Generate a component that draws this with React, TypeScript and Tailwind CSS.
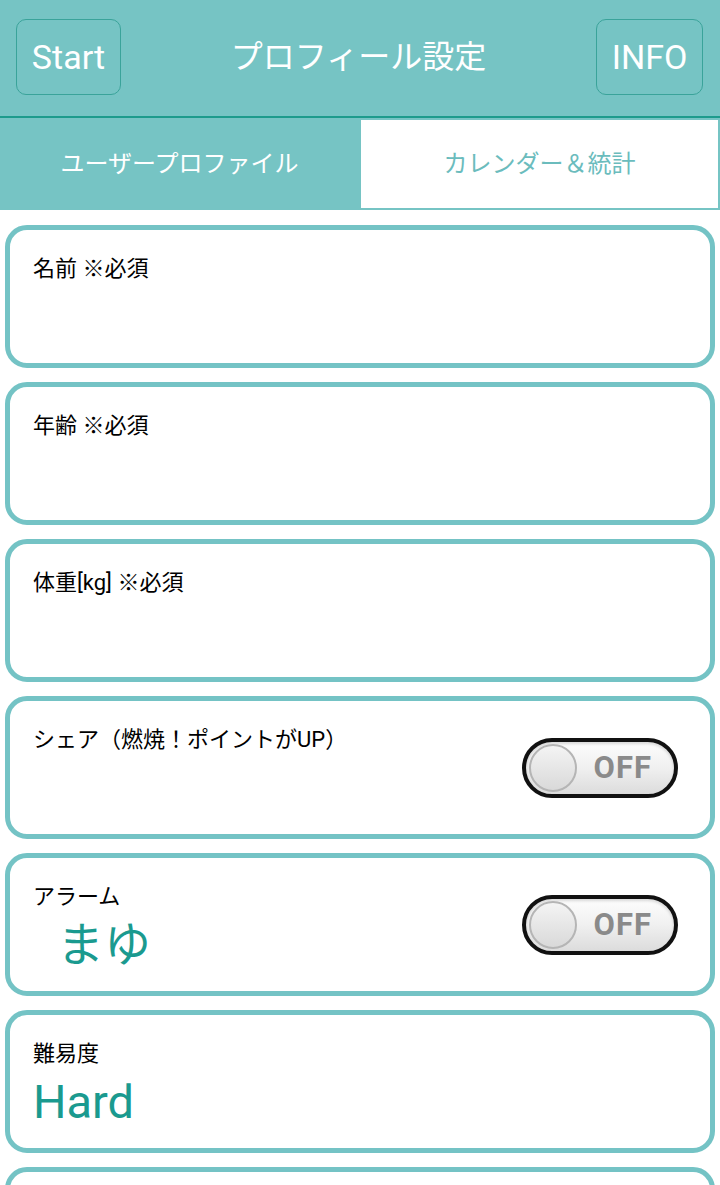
import React from "react";

const FONT = { fontFamily: '"Roboto", "Noto Sans CJK JP", sans-serif' } as React.CSSProperties;

function Toggle() {
  return (
    <div className="relative mr-[9px] h-[60px] w-[156px] shrink-0 rounded-full border-[4px] border-[#111] bg-gradient-to-b from-[#fdfdfd] via-[#f0f0f0] to-[#dcdcdc] shadow-[inset_0_2px_3px_rgba(0,0,0,0.15)]">
      <div className="absolute left-[3px] top-[2px] h-[48px] w-[48px] rounded-full border-[2px] border-[#b5b5b5] bg-gradient-to-b from-[#f4f4f4] to-[#d9d9d9]" />
      <div className="absolute right-[22px] top-0 flex h-full items-center text-[31px] font-bold leading-none tracking-[1px] text-[#8a8a8a]">
        OFF
      </div>
    </div>
  );
}

function Card({
  label,
  value,
  valueIndent,
  toggle,
}: {
  label: string;
  value?: string;
  valueIndent?: boolean;
  toggle?: boolean;
}) {
  return (
    <div className="flex h-[143px] shrink-0 items-center justify-between rounded-[22px] border-[5px] border-[#74c3c5] bg-white pl-[23px] pr-[23px]">
      <div className="flex h-full flex-col self-start pt-[23px]">
        <div className="text-[22px] leading-[31px] text-black">{label}</div>
        {value && (
          <div
            className={`mt-[5px] text-[47px] leading-[55px] text-[#1a9a8f] ${valueIndent ? "ml-[24px]" : ""}`}
          >
            {value}
          </div>
        )}
      </div>
      {toggle && <Toggle />}
    </div>
  );
}

export default function App() {
  return (
    <div className="h-[1185px] w-[720px] overflow-hidden bg-white" style={FONT}>
      {/* Header */}
      <div className="flex h-[118px] items-center justify-between border-b-[2px] border-[#1d9b8c] bg-[#76c4c4] px-[16px] pb-[2px]">
        <div className="flex h-[76px] w-[105px] items-center justify-center rounded-[10px] border-[1.5px] border-[#3aa39a] text-[34px] text-white">
          Start
        </div>
        <div className="text-[32px] text-white">プロフィール設定</div>
        <div className="mr-[1px] flex h-[76px] w-[107px] items-center justify-center rounded-[10px] border-[1.5px] border-[#3aa39a] text-[34px] text-white">
          INFO
        </div>
      </div>
      {/* Tabs */}
      <div className="grid h-[92px] grid-cols-2 bg-[#76c4c4] pb-[2px] pr-[2px] pt-[2px]">
        <div className="flex items-center justify-center text-[24px] text-white">
          ユーザープロファイル
        </div>
        <div className="ml-[2px] flex items-center justify-center bg-white text-[24px] text-[#6bbcbd]">
          カレンダー＆統計
        </div>
      </div>
      {/* Cards */}
      <div className="flex flex-col gap-[14px] px-[5px] pt-[15px]">
        <Card label="名前 ※必須" />
        <Card label="年齢 ※必須" />
        <Card label="体重[kg] ※必須" />
        <Card label="シェア（燃焼！ポイントがUP）" toggle />
        <Card label="アラーム" value="まゆ" valueIndent toggle />
        <Card label="難易度" value="Hard" />
        <Card label="" />
      </div>
    </div>
  );
}
